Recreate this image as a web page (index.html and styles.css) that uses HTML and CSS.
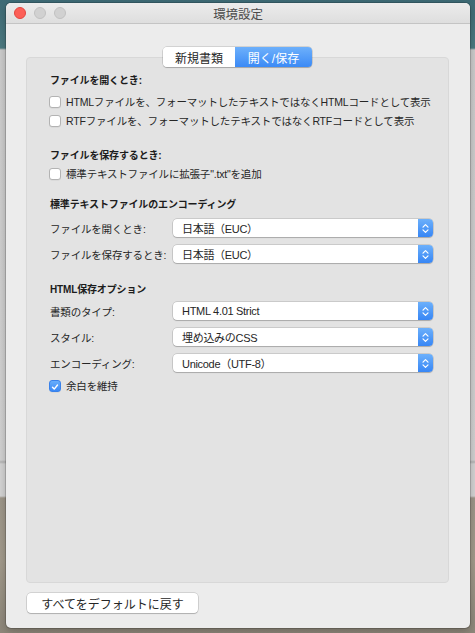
FILE: index.html
```html
<!DOCTYPE html>
<html lang="ja">
<head>
<meta charset="utf-8">
<title>環境設定</title>
<link rel="stylesheet" href="styles.css">
</head>
<body>
<div class="desktop">
  <div class="window">
    <div class="titlebar">
      <div class="lights">
        <span class="light close"></span>
        <span class="light"></span>
        <span class="light"></span>
      </div>
      <div class="title">環境設定</div>
      <div></div>
    </div>
    <div class="content">
      <div class="segmented">
        <span class="seg">新規書類</span>
        <span class="seg active">開く/保存</span>
      </div>
      <div class="box">
        <div class="heading h-first">ファイルを開くとき:</div>
        <div class="check gap-5"><span class="cb"></span><span class="cb-text">HTMLファイルを、フォーマットしたテキストではなくHTMLコードとして表示</span></div>
        <div class="check"><span class="cb"></span><span class="cb-text">RTFファイルを、フォーマットしたテキストではなくRTFコードとして表示</span></div>

        <div class="heading h-save">ファイルを保存するとき:</div>
        <div class="check gap-2"><span class="cb"></span><span class="cb-text">標準テキストファイルに拡張子".txt"を追加</span></div>

        <div class="heading h-enc">標準テキストファイルのエンコーディング</div>
        <div class="prow gap-4"><span class="plabel">ファイルを開くとき:</span><div class="popup"><span class="pvalue">日本語（EUC）</span><span class="stepper"><svg width="7" height="11" viewBox="0 0 7 11"><path d="M1 4.2 L3.5 1.7 L6 4.2 M1 6.8 L3.5 9.3 L6 6.8" fill="none" stroke="#fff" stroke-width="1.2" stroke-linecap="round" stroke-linejoin="round"/></svg></span></div></div>
        <div class="prow"><span class="plabel">ファイルを保存するとき:</span><div class="popup"><span class="pvalue">日本語（EUC）</span><span class="stepper"><svg width="7" height="11" viewBox="0 0 7 11"><path d="M1 4.2 L3.5 1.7 L6 4.2 M1 6.8 L3.5 9.3 L6 6.8" fill="none" stroke="#fff" stroke-width="1.2" stroke-linecap="round" stroke-linejoin="round"/></svg></span></div></div>

        <div class="heading h-html">HTML保存オプション</div>
        <div class="prow gap-2"><span class="plabel">書類のタイプ:</span><div class="popup"><span class="pvalue">HTML 4.01 Strict</span><span class="stepper"><svg width="7" height="11" viewBox="0 0 7 11"><path d="M1 4.2 L3.5 1.7 L6 4.2 M1 6.8 L3.5 9.3 L6 6.8" fill="none" stroke="#fff" stroke-width="1.2" stroke-linecap="round" stroke-linejoin="round"/></svg></span></div></div>
        <div class="prow"><span class="plabel">スタイル:</span><div class="popup"><span class="pvalue">埋め込みのCSS</span><span class="stepper"><svg width="7" height="11" viewBox="0 0 7 11"><path d="M1 4.2 L3.5 1.7 L6 4.2 M1 6.8 L3.5 9.3 L6 6.8" fill="none" stroke="#fff" stroke-width="1.2" stroke-linecap="round" stroke-linejoin="round"/></svg></span></div></div>
        <div class="prow"><span class="plabel">エンコーディング:</span><div class="popup"><span class="pvalue">Unicode（UTF-8）</span><span class="stepper"><svg width="7" height="11" viewBox="0 0 7 11"><path d="M1 4.2 L3.5 1.7 L6 4.2 M1 6.8 L3.5 9.3 L6 6.8" fill="none" stroke="#fff" stroke-width="1.2" stroke-linecap="round" stroke-linejoin="round"/></svg></span></div></div>
        <div class="check"><span class="cb checked"><svg width="12" height="12" viewBox="0 0 12 12"><path d="M3 6.3 L5.1 8.5 L9 3.6" fill="none" stroke="#fff" stroke-width="1.7" stroke-linecap="round" stroke-linejoin="round"/></svg></span><span class="cb-text">余白を維持</span></div>
      </div>
      <div class="footer">
        <button class="btn">すべてをデフォルトに戻す</button>
      </div>
    </div>
  </div>
</div>
</body>
</html>
```

FILE: styles.css
```css
html, body {
  margin: 0;
  padding: 0;
}
body {
  width: 475px;
  height: 633px;
  overflow: hidden;
  font-family: "Liberation Sans", "Noto Sans CJK JP", sans-serif;
  color: #262626;
}
.desktop {
  height: 633px;
  box-sizing: border-box;
  padding: 3px 5px 5px 6px;
  background:
    linear-gradient(to bottom,
      #3e6b76 0, #4d7b82 48px,
      #cdcdcd 50px, #d2d2d2 460px, #b4b4b4 462px, #d4d4d4 464px, #d4d4d4 496px,
      #9e978a 498px, #a39b8c 560px, #8e877a 633px);
}
.window {
  height: 625px;
  background: #ececec;
  border-radius: 5px;
  display: flex;
  flex-direction: column;
  overflow: hidden;
  box-shadow: 0 0 0 1px rgba(0,0,0,0.16), 0 3px 10px rgba(0,0,0,0.25);
}
.titlebar {
  height: 20px;
  border-bottom: 1px solid #c4c4c4;
  background: linear-gradient(to bottom, #ececec, #dedede);
  display: grid;
  grid-template-columns: 1fr auto 1fr;
  align-items: center;
}
.lights {
  display: flex;
  gap: 8px;
  padding-left: 8px;
}
.light {
  width: 12px;
  height: 12px;
  box-sizing: border-box;
  border-radius: 50%;
  background: #d1d1d1;
  border: 1px solid #c1c1c1;
}
.light.close {
  background: #fc5f57;
  border-color: #e2463f;
}
.title {
  font-size: 12.5px;
  color: #4b4b4b;
  letter-spacing: -0.1px;
}
.content {
  flex: 1;
  display: flex;
  flex-direction: column;
  padding: 23px 21px 15px 20px;
}
.segmented {
  align-self: center;
  display: flex;
  height: 20px;
  margin-bottom: -10px;
  position: relative;
  z-index: 1;
  border-radius: 4px;
  box-shadow: 0 0 0 0.5px rgba(0,0,0,0.22), 0 1px 1px rgba(0,0,0,0.18);
  font-size: 12px;
}
.seg {
  display: flex;
  align-items: center;
  justify-content: center;
  background: #fff;
  color: #262626;
  width: 72px;
  border-radius: 4px 0 0 4px;
}
.seg.active {
  width: 77px;
  color: #fff;
  background: linear-gradient(to bottom, #6db0fb, #3b8af6);
  border-radius: 0 4px 4px 0;
}
.box {
  flex: 1;
  background: #e3e3e3;
  border: 1px solid #d8d8d8;
  border-radius: 4px;
  padding: 13px 15px 0 23px;
  display: flex;
  flex-direction: column;
}
.heading {
  height: 16px;
  display: flex;
  align-items: center;
  font-size: 10px;
  font-weight: bold;
  letter-spacing: -0.15px;
  color: #1c1c1c;
}
.h-save { margin-top: 16px; }
.h-enc { margin-top: 12px; }
.h-html { margin-top: 13px; }
.gap-5 { margin-top: 5px; }
.gap-4 { margin-top: 4px; }
.gap-2 { margin-top: 2px; }
.check {
  height: 19px;
  display: flex;
  align-items: center;
  gap: 5px;
  margin-left: -1px;
}
.cb {
  width: 12px;
  height: 12px;
  box-sizing: border-box;
  border-radius: 3px;
  background: #fff;
  border: 1px solid #b3b3b3;
  box-shadow: 0 0.5px 0.5px rgba(0,0,0,0.08);
  display: flex;
}
.cb.checked {
  background: linear-gradient(to bottom, #68aefb, #3a88f5);
  border-color: #3a82ea;
}
.cb-text, .plabel {
  font-size: 10.5px;
  letter-spacing: -0.18px;
  color: #262626;
}
.prow {
  height: 26px;
  display: flex;
  align-items: center;
}
.plabel {
  width: 123px;
  flex: none;
}
.popup {
  width: 261px;
  height: 18px;
  box-sizing: border-box;
  background: #fff;
  border-radius: 4px;
  box-shadow: 0 0 0 0.5px rgba(0,0,0,0.22), 0 1px 1px rgba(0,0,0,0.16);
  display: flex;
  align-items: center;
  justify-content: space-between;
}
.pvalue {
  padding-left: 9px;
  font-size: 11px;
  letter-spacing: -0.3px;
  color: #262626;
}
.stepper {
  width: 15px;
  height: 18px;
  border-radius: 0 4px 4px 0;
  background: linear-gradient(to bottom, #6cb0fb, #3786f5);
  display: flex;
  align-items: center;
  justify-content: center;
}
.footer {
  margin-top: 10px;
  display: flex;
}
.btn {
  margin-left: 1px;
  width: 171px;
  height: 20px;
  padding: 0;
  font-family: "Liberation Sans", "Noto Sans CJK JP", sans-serif;
  font-size: 12px;
  color: #262626;
  background: #fff;
  border: none;
  border-radius: 4px;
  box-shadow: 0 0 0 0.5px rgba(0,0,0,0.22), 0 1px 1px rgba(0,0,0,0.16);
}
```
